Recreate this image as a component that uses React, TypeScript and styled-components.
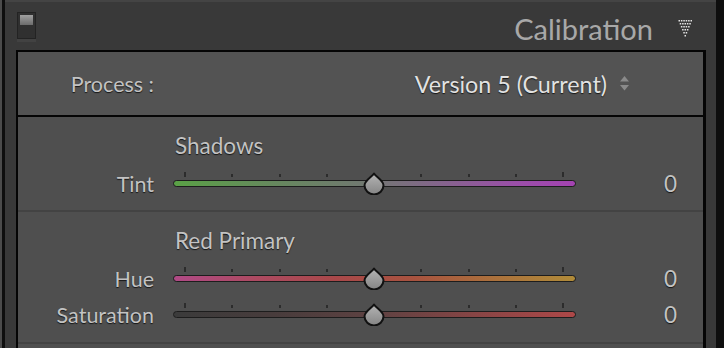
import styled, { createGlobalStyle } from 'styled-components';

const GlobalStyle = createGlobalStyle`
  html, body {
    margin: 0;
    padding: 0;
    background: #0e0e0e;
    overflow: hidden;
  }
  body {
    font-family: Lato, "Open Sans", sans-serif;
  }
`;

const Screen = styled.div`
  display: flex;
  width: 724px;
  height: 348px;
  overflow: hidden;
  background: #0e0e0e;
`;

const LeftEdge = styled.div`
  width: 2px;
  margin-right: 3px;
  background: #4b4b4b;
`;

const Panel = styled.div`
  flex: 1;
  margin-right: 8px;
  display: flex;
  flex-direction: column;
  background: #393939;
`;

const Header = styled.div`
  height: 50px;
  box-sizing: border-box;
  display: flex;
  align-items: center;
  padding: 4px 23px 0 12px;
  border-top: 2px solid #444;
`;

const Toggle = styled.div`
  width: 19px;
  height: 27px;
  box-sizing: border-box;
  margin-top: -6px;
  padding: 2px;
  border: 1px solid #232323;
  background: #303030;
  box-shadow: 0 3px 0 #424242;
`;

const ToggleKnob = styled.div`
  height: 10px;
  background: linear-gradient(#a0a0a0, #6c6c6c);
`;

const Title = styled.div`
  margin-left: auto;
  font-size: 29px;
  color: #a8a8a8;
`;

const Collapse = styled.svg`
  margin-left: 25px;
  width: 15px;
  height: 18px;
`;

const Body = styled.div`
  flex: 1;
  margin: 0 10px 0 11px;
  border-top: 2px solid #050505;
  border-left: 2px solid #050505;
  border-right: 3px solid #050505;
  background: #4f4f4f;
`;

const Grid = styled.div`
  display: grid;
  grid-template-columns: 137px 403px 1fr;
  column-gap: 18px;
  align-items: center;
`;

const ProcessRow = styled(Grid)`
  height: 65px;
  box-sizing: border-box;
  border-bottom: 2px solid #050505;
  background: #535353;
`;

const Section = styled(Grid)<{ $padBottom: number }>`
  row-gap: 12px;
  padding: 17px 0 ${(p) => p.$padBottom}px;
  border-bottom: 2px solid #434343;
`;

const Text = styled.div<{ $bright?: boolean; $size?: number }>`
  font-size: ${(p) => p.$size ?? 22.5}px;
  line-height: 24px;
  color: ${(p) => (p.$bright ? '#e2e2e2' : '#c3c3c3')};
  text-shadow: 0 1px 1px rgba(0, 0, 0, 0.75);
  white-space: nowrap;
`;

const Label = styled(Text)`
  grid-column: 1;
  text-align: right;
  padding-right: 1px;
`;

const SectionTitle = styled(Text)`
  grid-column: 2;
  padding-left: 2px;
  margin-bottom: 2px;
`;

const Value = styled(Text)`
  grid-column: 3;
  text-align: right;
  padding-right: 26px;
`;

const Version = styled.div`
  grid-column: 2 / 4;
  display: flex;
  justify-content: flex-end;
  align-items: center;
  gap: 12px;
  padding-right: 73px;
`;

const Slider = styled.div`
  grid-column: 2;
  position: relative;
  height: 24px;
`;

const Ticks = styled.div`
  height: 5px;
  margin: 0 12px 0 11px;
  display: flex;
  justify-content: space-between;
  align-items: flex-end;
`;

const Tick = styled.div<{ $end?: boolean }>`
  width: 2px;
  height: ${(p) => (p.$end ? 5 : 3)}px;
  background: #2c2c2c;
`;

const Track = styled.div<{ $fill: string }>`
  height: 7px;
  margin-top: 3px;
  box-sizing: border-box;
  border: 1.5px solid #1d1d1d;
  border-radius: 4px;
  background: ${(p) => p.$fill};
`;

const Thumb = styled.svg`
  position: absolute;
  left: 190px;
  top: 0;
  width: 22px;
  height: 23px;
`;

const fills = {
  tint: 'linear-gradient(to right, #5aa146 0%, #66885e 25%, #717871 48%, #7d6c82 60%, #9a4fa8 85%, #a443b2 100%)',
  hue: 'linear-gradient(to right, #b04a86 0%, #ad4a62 20%, #a9484a 40%, #a8533f 60%, #ab713c 80%, #b08b39 100%)',
  saturation: 'linear-gradient(to right, #3b3b3b 0%, #483c3c 25%, #5e4242 50%, #874545 75%, #ad4848 100%)',
};

const SliderControl = ({ fill }: { fill: string }) => (
  <Slider>
    <Ticks>
      {Array.from({ length: 9 }).map((_, i) => (
        <Tick key={i} $end={i === 0 || i === 8} />
      ))}
    </Ticks>
    <Track $fill={fill} />
    <Thumb viewBox="0 0 22 23">
      <defs>
        <linearGradient id="thumbFill" x1="0" y1="0" x2="0" y2="1">
          <stop offset="0" stopColor="#b4b4b4" />
          <stop offset="1" stopColor="#858585" />
        </linearGradient>
      </defs>
      <path
        d="M11 1.6 C13.5 5 20.5 8.6 20.5 13.2 A9.5 9.2 0 0 1 1.5 13.2 C1.5 8.6 8.5 5 11 1.6 Z"
        fill="url(#thumbFill)"
        stroke="#111"
        strokeWidth="2"
        strokeLinejoin="round"
      />
    </Thumb>
  </Slider>
);

const Row = ({ label, fill }: { label: string; fill: string }) => (
  <>
    <Label $size={21.5}>{label}</Label>
    <SliderControl fill={fill} />
    <Value>0</Value>
  </>
);

const dots: { x: number; y: number }[] = [];
for (let r = 0; r < 6; r++) {
  for (let c = 0; c < 6 - r; c++) {
    dots.push({ x: 0.5 + r * 1.2 + c * 2.4, y: 1 + r * 3 });
  }
}

const App = () => (
  <>
    <GlobalStyle />
    <Screen>
      <LeftEdge />
      <Panel>
        <Header>
          <Toggle>
            <ToggleKnob />
          </Toggle>
          <Title>Calibration</Title>
          <Collapse viewBox="0 0 15 18">
            {dots.map((d, i) => (
              <rect key={i} x={d.x} y={d.y} width="1.5" height="1.5" fill="#e4e4e4" />
            ))}
          </Collapse>
        </Header>
        <Body>
          <ProcessRow>
            <Label $size={21.5}>Process :</Label>
            <Version>
              <Text $bright $size={23.3}>Version 5 (Current)</Text>
              <svg width="11" height="17" viewBox="0 0 11 17">
                <path d="M5.5 1 L10 6.5 H1 Z" fill="#8a8a8a" />
                <path d="M1 10 H10 L5.5 15.5 Z" fill="#8a8a8a" />
              </svg>
            </Version>
          </ProcessRow>
          <Section $padBottom={14}>
            <SectionTitle>Shadows</SectionTitle>
            <Row label="Tint" fill={fills.tint} />
          </Section>
          <Section $padBottom={15}>
            <SectionTitle>Red Primary</SectionTitle>
            <Row label="Hue" fill={fills.hue} />
            <Row label="Saturation" fill={fills.saturation} />
          </Section>
        </Body>
      </Panel>
    </Screen>
  </>
);

export default App;
